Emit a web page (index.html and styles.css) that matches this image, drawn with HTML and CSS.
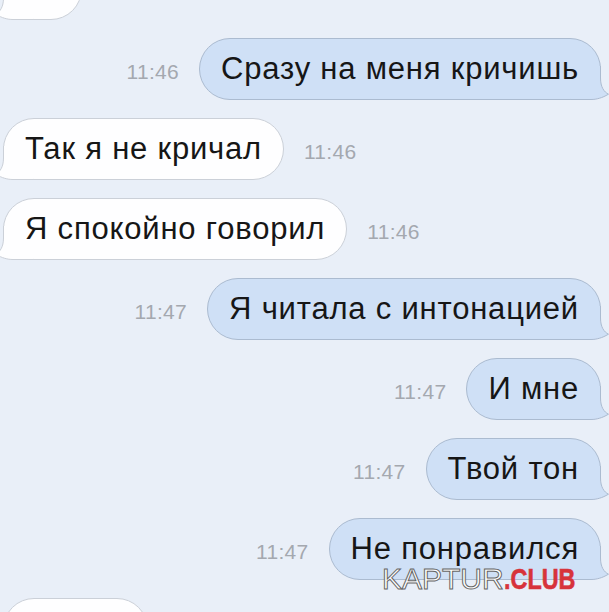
FILE: index.html
```html
<!DOCTYPE html>
<html lang="ru">
<head>
<meta charset="utf-8">
<title>Диалог</title>
<link rel="stylesheet" href="styles.css">
</head>
<body>
<svg class="defs" width="0" height="0" aria-hidden="true">
  <symbol id="tail" viewBox="0 0 40 34">
    <path stroke="none" d="M0 0 L29.5 0 L29.5 12 C29.5 21 33 26 37.5 28.2 C31 32 25.5 33.5 20 33.5 L0 33.5 Z"/>
    <path fill="none" d="M0 33.5 L20 33.5 C25.5 33.5 31 32 37.5 28.2 C33 26 29.5 21 29.5 12 L29.5 0"/>
  </symbol>
</svg>

<main class="chat">
  <div class="row in">
    <div class="bubble stub-top"><svg class="tail"><use href="#tail"/></svg></div>
  </div>
  <div class="row out">
    <span class="time">11:46</span>
    <div class="bubble"><span class="text">Сразу на меня кричишь</span><svg class="tail"><use href="#tail"/></svg></div>
  </div>
  <div class="row in">
    <div class="bubble"><span class="text">Так я не кричал</span><svg class="tail"><use href="#tail"/></svg></div>
    <span class="time">11:46</span>
  </div>
  <div class="row in">
    <div class="bubble"><span class="text">Я спокойно говорил</span><svg class="tail"><use href="#tail"/></svg></div>
    <span class="time">11:46</span>
  </div>
  <div class="row out">
    <span class="time">11:47</span>
    <div class="bubble"><span class="text">Я читала с интонацией</span><svg class="tail"><use href="#tail"/></svg></div>
  </div>
  <div class="row out">
    <span class="time">11:47</span>
    <div class="bubble"><span class="text">И мне</span><svg class="tail"><use href="#tail"/></svg></div>
  </div>
  <div class="row out">
    <span class="time">11:47</span>
    <div class="bubble"><span class="text">Твой тон</span><svg class="tail"><use href="#tail"/></svg></div>
  </div>
  <div class="row out">
    <span class="time">11:47</span>
    <div class="bubble"><span class="text">Не понравился</span><svg class="tail"><use href="#tail"/></svg></div>
  </div>
  <div class="row in">
    <div class="bubble stub-bottom"><svg class="tail"><use href="#tail"/></svg></div>
  </div>
</main>

<div class="watermark"><span class="wm-light">KAPTUR</span><span class="wm-bold">.CLUB</span></div>
</body>
</html>
```

FILE: styles.css
```css
html, body {
  margin: 0;
  padding: 0;
}

body {
  width: 609px;
  height: 612px;
  overflow: hidden;
  position: relative;
  background: #e9eff8;
  font-family: "Liberation Sans", Arial, "Helvetica Neue", sans-serif;
  color: #161616;
}

.defs {
  position: absolute;
  width: 0;
  height: 0;
}

/* message list */
.chat {
  display: flex;
  flex-direction: column;
  gap: 18px;
  margin-top: -42px;
}

.row {
  display: flex;
  align-items: baseline;
  gap: 20px;
}

.row.out {
  justify-content: flex-end;
  padding-right: 8px;
}

.row.in {
  justify-content: flex-start;
  padding-left: 3px;
}

.bubble {
  position: relative;
  box-sizing: content-box;
  height: 60px;
  line-height: 60px;
  padding: 0 21px;
  border: 1px solid;
  border-radius: 31px;
  font-size: 31px;
  letter-spacing: 0.8px;
  white-space: nowrap;
}

.bubble .text {
  position: relative;
  z-index: 1;
}

/* bubbles that run past the top and bottom of the view */
.stub-top {
  width: 35px;
}

.stub-bottom {
  width: 101px;
}

.out .bubble {
  background: #cfe0f6;
  border-color: #abbbd0;
}

.in .bubble {
  background: #fefeff;
  border-color: #cbd0d8;
}

/* curled tail at the bottom corner of every bubble */
.tail {
  position: absolute;
  bottom: -1px;
  width: 40px;
  height: 34px;
  z-index: 0;
}

.out .tail {
  right: -11px;
  fill: #cfe0f6;
  stroke: #abbbd0;
}

.in .tail {
  left: -11px;
  transform: scaleX(-1);
  fill: #fefeff;
  stroke: #cbd0d8;
}

.time {
  font-size: 21px;
  color: #a4a8af;
  letter-spacing: 0.3px;
}

/* site mark in the lower right */
.watermark {
  position: absolute;
  left: 382px;
  top: 564px;
  font-size: 30px;
  line-height: 30px;
  white-space: nowrap;
}

.wm-light {
  color: #ffffff;
  -webkit-text-stroke: 1px #666666;
}

.wm-bold {
  display: inline-block;
  font-weight: 700;
  color: #d7333b;
  -webkit-text-stroke: 0.6px #d7333b;
  transform: scaleX(0.78);
  transform-origin: left center;
}
```
